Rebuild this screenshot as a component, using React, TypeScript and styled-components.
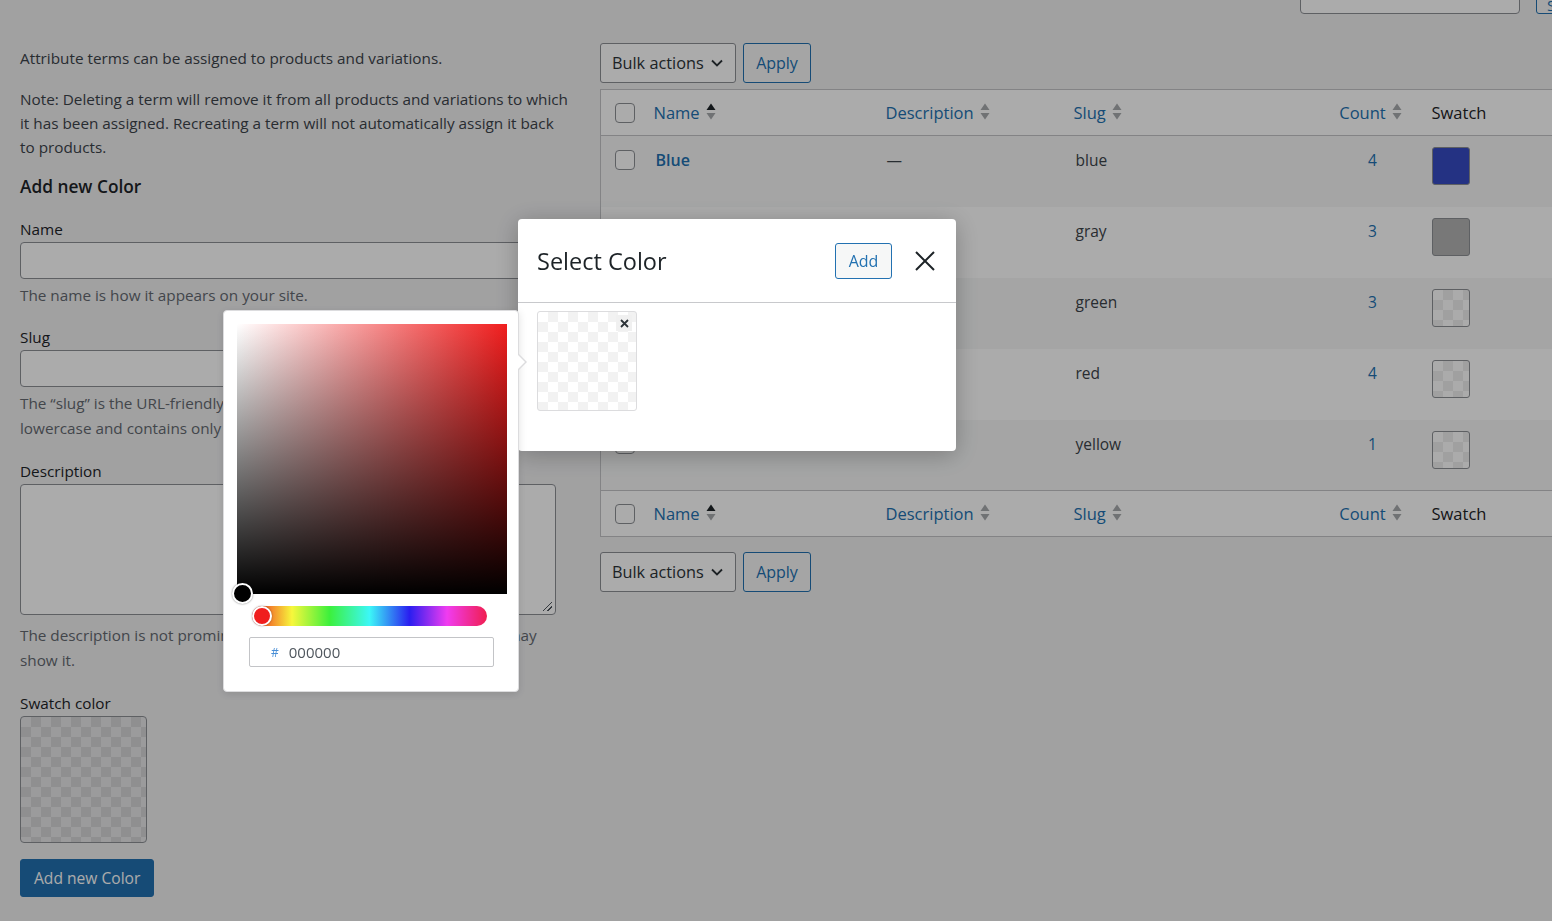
import React from "react";
import styled, { createGlobalStyle } from "styled-components";

const GlobalStyle = createGlobalStyle`
  * { box-sizing: border-box; }
  html, body {
    margin: 0;
    padding: 0;
    overflow: hidden;
    background: #f0f0f1;
  }
  body {
    font-family: "Open Sans", "Liberation Sans", sans-serif;
    font-size: 15.3px;
    color: #3c434a;
  }
`;

type Term = {
  name: string;
  slug: string;
  count: number;
  swatch?: string;
};

const terms: Term[] = [
  { name: "Blue", slug: "blue", count: 4, swatch: "#364bc4" },
  { name: "Gray", slug: "gray", count: 3, swatch: "#b3b3b3" },
  { name: "Green", slug: "green", count: 3 },
  { name: "Red", slug: "red", count: 4 },
  { name: "Yellow", slug: "yellow", count: 1 },
];

function SortIcon({ active }: { active?: boolean }) {
  return (
    <svg width="10" height="19" viewBox="0 0 10 19">
      <path d="M0.5 8 5 1.5 9.5 8Z" fill={active ? "#1d2327" : "#a7aaad"} />
      <path d="M0.5 11 5 17.5 9.5 11Z" fill="#a7aaad" />
    </svg>
  );
}

function Chevron() {
  return (
    <svg width="14" height="14" viewBox="0 0 14 14">
      <path d="M2 4.5 7 9.5 12 4.5" fill="none" stroke="#2c3338" strokeWidth="1.8" />
    </svg>
  );
}

function BulkActions() {
  return (
    <BulkBar>
      <Select>
        Bulk actions
        <Chevron />
      </Select>
      <SecondaryButton>Apply</SecondaryButton>
    </BulkBar>
  );
}

function HeaderRow({ top }: { top?: boolean }) {
  return (
    <tr>
      <HeadCell $top={top}>
        <Checkbox />
      </HeadCell>
      <HeadCell $top={top}>
        <SortLink>
          Name <SortIcon active />
        </SortLink>
      </HeadCell>
      <HeadCell $top={top}>
        <SortLink>
          Description <SortIcon />
        </SortLink>
      </HeadCell>
      <HeadCell $top={top}>
        <SortLink>
          Slug <SortIcon />
        </SortLink>
      </HeadCell>
      <HeadCell $top={top} $center>
        <SortLink>
          Count <SortIcon />
        </SortLink>
      </HeadCell>
      <HeadCell $top={top}>
        <PlainHead>Swatch</PlainHead>
      </HeadCell>
    </tr>
  );
}

export default function App() {
  return (
    <>
      <GlobalStyle />
      <Page>
        <SearchRow>
          <SearchInput />
          <SearchButton>Search Colors</SearchButton>
        </SearchRow>
        <Columns>
          <LeftCol>
            <Intro>Attribute terms can be assigned to products and variations.</Intro>
            <Note>
              Note: Deleting a term will remove it from all products and variations to which it has
              been assigned. Recreating a term will not automatically assign it back to products.
            </Note>
            <FormTitle>Add new Color</FormTitle>

            <Field>
              <Label>Name</Label>
              <TextInput />
              <Help>The name is how it appears on your site.</Help>
            </Field>

            <Field>
              <Label>Slug</Label>
              <TextInput />
              <Help $lh={25}>
                The “slug” is the URL-friendly version of the name. It is usually all lowercase and
                contains only letters, numbers, and hyphens.
              </Help>
            </Field>

            <Field>
              <Label>Description</Label>
              <TextArea />
              <Help $lh={25} $gap={8}>
                The description is not prominent by default; however, some themes may show it.
              </Help>
            </Field>

            <Field>
              <Label>Swatch color</Label>
              <SwatchPreview />
            </Field>

            <PrimaryButton>Add new Color</PrimaryButton>
          </LeftCol>

          <RightCol>
            <BulkActions />
            <Table>
              <colgroup>
                <col style={{ width: 43 }} />
                <col style={{ width: 232 }} />
                <col style={{ width: 188 }} />
                <col style={{ width: 246 }} />
                <col style={{ width: 112 }} />
                <col style={{ width: 179 }} />
              </colgroup>
              <thead>
                <HeaderRow top />
              </thead>
              <tbody>
                {terms.map((t, i) => (
                  <BodyRow key={t.slug} $odd={i % 2 === 0}>
                    <Cell $pt={14}>
                      <Checkbox />
                    </Cell>
                    <Cell $pl={12}>
                      <TermLink>{t.name}</TermLink>
                    </Cell>
                    <Cell $pl={11}>—</Cell>
                    <Cell $pl={12}>{t.slug}</Cell>
                    <Cell $center>
                      <CountLink>{t.count}</CountLink>
                    </Cell>
                    <Cell $pt={11}>
                      <TableSwatch $color={t.swatch} />
                    </Cell>
                  </BodyRow>
                ))}
              </tbody>
              <tfoot>
                <HeaderRow />
              </tfoot>
            </Table>
            <BulkActions />
          </RightCol>
        </Columns>
      </Page>

      <Overlay />

      <Modal>
        <ModalHeader>
          <ModalTitle>Select Color</ModalTitle>
          <AddButton>Add</AddButton>
          <CloseButton aria-label="Close">
            <svg width="22" height="22" viewBox="0 0 22 22">
              <path d="M2 2 20 20M20 2 2 20" stroke="#1d2327" strokeWidth="2" />
            </svg>
          </CloseButton>
        </ModalHeader>
        <ModalBody>
          <ColorTile>
            <RemoveTile>
              <svg width="9" height="9" viewBox="0 0 9 9">
                <path d="M1 1 8 8M8 1 1 8" stroke="#2c3338" strokeWidth="1.8" />
              </svg>
            </RemoveTile>
          </ColorTile>
        </ModalBody>
      </Modal>

      <Picker>
        <PickerArrow />
        <Saturation>
          <SatHandle />
        </Saturation>
        <HueBar>
          <HueHandle />
        </HueBar>
        <HexField>
          <Hash>#</Hash>
          <HexValue>000000</HexValue>
        </HexField>
      </Picker>
    </>
  );
}

/* ---------- page ---------- */

const Page = styled.div`
  width: 1600px;
  padding-left: 20px;
`;

const SearchRow = styled.div`
  display: flex;
  justify-content: flex-end;
  gap: 16px;
  height: 32px;
  margin-top: -18px;
`;

const SearchInput = styled.div`
  width: 220px;
  height: 32px;
  background: #fff;
  border: 1px solid #8c8f94;
  border-radius: 4px;
`;

const SearchButton = styled.button`
  width: 64px;
  height: 32px;
  padding: 0 10px;
  overflow: hidden;
  white-space: nowrap;
  font: inherit;
  line-height: 44px;
  color: #2271b1;
  background: #f6f7f7;
  border: 1px solid #2271b1;
  border-radius: 3px;
`;

const Columns = styled.div`
  display: grid;
  grid-template-columns: 560px 1000px;
  column-gap: 20px;
`;

/* ---------- left form ---------- */

const LeftCol = styled.div`
  display: flex;
  flex-direction: column;
  align-items: flex-start;
`;

const Intro = styled.p`
  margin: 32px 0 0;
  line-height: 24px;
`;

const Note = styled.p`
  max-width: 550px;
  margin: 17px 0 0;
  line-height: 24px;
`;

const FormTitle = styled.h2`
  margin: 17px 0 0;
  font-size: 17.3px;
  font-weight: 600;
  line-height: 22px;
  color: #1d2327;
`;

const Field = styled.div`
  width: 100%;
  margin-top: 18px;
  display: flex;
  flex-direction: column;
  align-items: flex-start;
  &:first-of-type {
    margin-top: 19px;
  }
`;

const Label = styled.label`
  line-height: 24px;
  color: #1d2327;
`;

const TextInput = styled.div`
  width: 536px;
  height: 37px;
  margin-top: 1px;
  background: #fff;
  border: 1px solid #8c8f94;
  border-radius: 4px;
`;

const TextArea = styled.div`
  position: relative;
  width: 536px;
  height: 131px;
  margin-top: 1px;
  background: #fff;
  border: 1px solid #8c8f94;
  border-radius: 4px;
  &::after {
    content: "";
    position: absolute;
    right: 3px;
    bottom: 3px;
    width: 9px;
    height: 9px;
    background: linear-gradient(
      135deg,
      transparent 45%,
      #50575e 45%,
      #50575e 52%,
      transparent 52%,
      transparent 72%,
      #50575e 72%,
      #50575e 79%,
      transparent 79%
    );
  }
`;

const Help = styled.p<{ $lh?: number; $gap?: number }>`
  max-width: 521px;
  margin: ${(p) => p.$gap ?? 4}px 0 0;
  line-height: ${(p) => p.$lh ?? 24}px;
  color: #646970;
`;

const SwatchPreview = styled.div`
  width: 127px;
  height: 127px;
  margin-top: 1px;
  border: 1px solid #8c8f94;
  border-radius: 4px;
  background: repeating-conic-gradient(#d6d6d7 0 25%, #e8e8e9 0 50%) 0 0 / 20px 20px;
`;

const PrimaryButton = styled.button`
  margin-top: 16px;
  height: 38px;
  padding: 0 13px;
  font: inherit;
  font-size: 15.6px;
  color: #fff;
  background: #2271b1;
  border: 1px solid #2271b1;
  border-radius: 3px;
`;

/* ---------- right table ---------- */

const RightCol = styled.div`
  display: flex;
  flex-direction: column;
  align-items: flex-start;
`;

const BulkBar = styled.div`
  display: flex;
  gap: 7px;
  margin-top: 29px;
  & + table {
    margin-top: 6px;
  }
  table + & {
    margin-top: 15px;
  }
`;

const Select = styled.div`
  display: flex;
  align-items: center;
  justify-content: space-between;
  width: 136px;
  height: 40px;
  padding: 0 11px;
  font-size: 16.3px;
  color: #2c3338;
  background: #fff;
  border: 1px solid #8c8f94;
  border-radius: 3px;
`;

const SecondaryButton = styled.button`
  width: 68px;
  height: 40px;
  padding: 0;
  font: inherit;
  font-size: 16px;
  color: #2271b1;
  background: #f6f7f7;
  border: 1px solid #2271b1;
  border-radius: 3px;
`;

const Table = styled.table`
  width: 1000px;
  table-layout: fixed;
  border-collapse: collapse;
  border: 1px solid #c3c4c7;
  background: #fff;
`;

const HeadCell = styled.th<{ $top?: boolean; $center?: boolean }>`
  height: 46px;
  padding: 0 0 0 10px;
  text-align: ${(p) => (p.$center ? "center" : "left")};
  vertical-align: middle;
  font-weight: 400;
  border-${(p) => (p.$top ? "bottom" : "top")}: 1px solid #c3c4c7;
  &:first-child {
    padding-left: 14px;
  }
`;

const SortLink = styled.span`
  display: inline-flex;
  align-items: center;
  gap: 6px;
  font-size: 16.5px;
  color: #2271b1;
  svg {
    margin-top: -2px;
  }
`;

const PlainHead = styled.span`
  font-size: 16.5px;
  color: #1d2327;
`;

const BodyRow = styled.tr<{ $odd: boolean }>`
  height: 71px;
  background: ${(p) => (p.$odd ? "#f6f7f7" : "#fff")};
`;

const Cell = styled.td<{ $pt?: number; $pl?: number; $center?: boolean }>`
  vertical-align: top;
  padding: ${(p) => p.$pt ?? 12}px 0 0 ${(p) => p.$pl ?? 10}px;
  line-height: 24px;
  font-size: 15.5px;
  color: #3c434a;
  text-align: ${(p) => (p.$center ? "center" : "left")};
  &:first-child {
    padding-left: 14px;
  }
`;

const Checkbox = styled.span`
  display: block;
  width: 20px;
  height: 20px;
  background: #fff;
  border: 1px solid #8c8f94;
  border-radius: 4px;
`;

const TermLink = styled.span`
  font-size: 16px;
  font-weight: 600;
  color: #2271b1;
`;

const CountLink = styled.span`
  color: #2271b1;
  margin-left: 4px;
`;

const TableSwatch = styled.div<{ $color?: string }>`
  width: 38px;
  height: 38px;
  border: 1px solid #8c8f94;
  border-radius: 3px;
  background: ${(p) =>
    p.$color ?? "repeating-conic-gradient(#efefef 0 25%, #ffffff 0 50%) 0 0 / 20px 20px"};
`;

/* ---------- overlay / modal ---------- */

const Overlay = styled.div`
  position: fixed;
  inset: 0;
  background: rgba(0, 0, 0, 0.33);
  z-index: 10;
`;

const Modal = styled.div`
  position: fixed;
  left: 518px;
  top: 219px;
  width: 438px;
  height: 232px;
  background: #fff;
  border-radius: 4px;
  box-shadow: 0 4px 24px rgba(0, 0, 0, 0.25);
  z-index: 20;
`;

const ModalHeader = styled.div`
  display: flex;
  align-items: center;
  height: 84px;
  padding: 0 20px 0 19px;
  border-bottom: 1px solid #c8c9cc;
`;

const ModalTitle = styled.h1`
  flex: 1;
  margin: 0;
  font-size: 23.5px;
  font-weight: 400;
  color: #1d2327;
`;

const AddButton = styled.button`
  width: 57px;
  height: 36px;
  padding: 0;
  margin-right: 22px;
  font: inherit;
  font-size: 16px;
  color: #2271b1;
  background: #f6f7f7;
  border: 1px solid #2271b1;
  border-radius: 3px;
`;

const CloseButton = styled.button`
  display: flex;
  padding: 0;
  background: none;
  border: 0;
`;

const ModalBody = styled.div`
  padding: 8px 19px;
`;

const ColorTile = styled.div`
  position: relative;
  width: 100px;
  height: 100px;
  border: 1px solid #dcdcde;
  border-radius: 3px;
  background: repeating-conic-gradient(#f2f2f2 0 25%, #ffffff 0 50%) 0 0 / 20px 20px;
`;

const RemoveTile = styled.span`
  position: absolute;
  top: 3px;
  right: 4px;
  width: 16px;
  height: 16px;
  display: flex;
  align-items: center;
  justify-content: center;
  background: #f0f0f0;
`;

/* ---------- color picker ---------- */

const Picker = styled.div`
  position: fixed;
  left: 223px;
  top: 310px;
  width: 296px;
  height: 382px;
  padding: 13px 0 0 13px;
  display: flex;
  flex-direction: column;
  align-items: flex-start;
  background: #fff;
  border: 1px solid #dcdcde;
  border-radius: 4px;
  box-shadow: 0 2px 8px rgba(0, 0, 0, 0.12);
  z-index: 30;
`;

const PickerArrow = styled.span`
  position: absolute;
  right: -9px;
  top: 42px;
  width: 0;
  height: 0;
  border-top: 9px solid transparent;
  border-bottom: 9px solid transparent;
  border-left: 9px solid #dcdcde;
  &::after {
    content: "";
    position: absolute;
    left: -10px;
    top: -8px;
    border-top: 8px solid transparent;
    border-bottom: 8px solid transparent;
    border-left: 8px solid #fff;
  }
`;

const Saturation = styled.div`
  position: relative;
  width: 270px;
  height: 270px;
  background: linear-gradient(to bottom, rgba(0, 0, 0, 0), #000),
    linear-gradient(to right, #fff, #f01e1e);
`;

const SatHandle = styled.span`
  position: absolute;
  left: -5px;
  bottom: -10px;
  width: 21px;
  height: 21px;
  border-radius: 50%;
  background: #000;
  border: 2px solid #fff;
  box-shadow: 0 0 2px rgba(0, 0, 0, 0.5);
`;

const HueBar = styled.div`
  position: relative;
  width: 235px;
  height: 20px;
  margin: 12px 0 0 15px;
  border-radius: 10px;
  background: linear-gradient(
    to right,
    #f01e1e 0%,
    #f7f73c 17%,
    #3cf03c 33%,
    #3cf7f7 50%,
    #2a1ef0 67%,
    #f03cf0 83%,
    #f01e50 100%
  );
`;

const HueHandle = styled.span`
  position: absolute;
  left: 0;
  top: 0;
  width: 20px;
  height: 20px;
  border-radius: 50%;
  background: #f01e1e;
  border: 2px solid #fff;
  box-shadow: 0 0 2px rgba(0, 0, 0, 0.4);
`;

const HexField = styled.div`
  display: flex;
  align-items: center;
  gap: 10px;
  width: 245px;
  height: 30px;
  margin: 11px 0 0 12px;
  padding-left: 21px;
  border: 1px solid #c3c4c7;
  border-radius: 2px;
`;

const Hash = styled.span`
  font-size: 12px;
  color: #4a8fd6;
`;

const HexValue = styled.span`
  font-size: 15px;
  color: #50575e;
`;
